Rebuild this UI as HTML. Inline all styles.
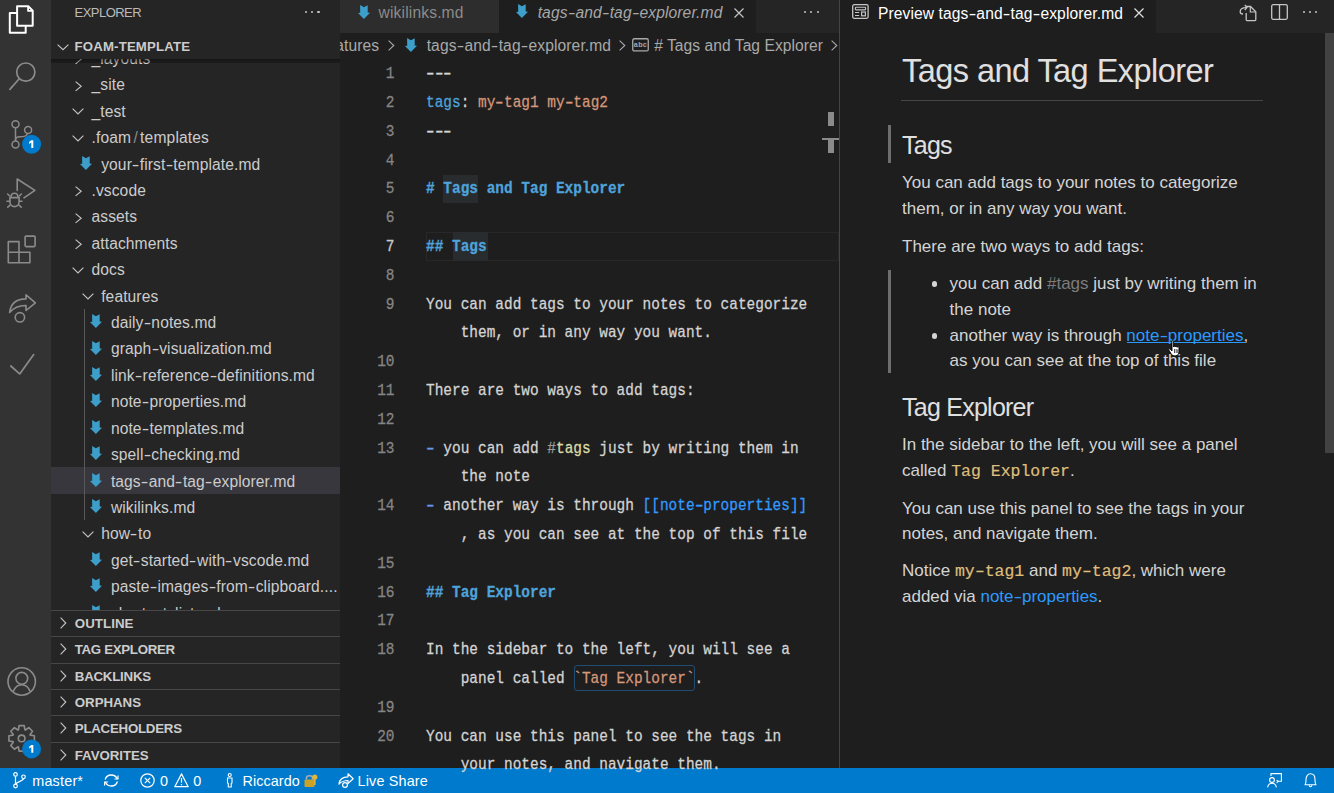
<!DOCTYPE html><html><head><meta charset="utf-8"><style>
html,body{margin:0;padding:0;width:1334px;height:793px;overflow:hidden;background:#1e1e1e;}
.t{position:absolute;white-space:pre;}
.m{-webkit-text-stroke:0.25px currentColor;transform:scaleY(1.1);transform-origin:0 18.3px;}
.r{position:absolute;}
.s{position:absolute;overflow:visible;}
.clip{position:absolute;overflow:hidden;}
</style></head><body>
<div class="r" style="left:0px;top:0px;width:51px;height:768px;background:#333333;"></div>
<div class="r" style="left:51px;top:0px;width:289px;height:768px;background:#252526;"></div>
<div class="r" style="left:340px;top:0px;width:499px;height:33px;background:#252526;"></div>
<div class="r" style="left:340px;top:0px;width:158.5px;height:33px;background:#2d2d2d;"></div>
<div class="r" style="left:498.5px;top:0px;width:257.5px;height:33px;background:#1e1e1e;"></div>
<div class="r" style="left:340px;top:33px;width:499px;height:735px;background:#1e1e1e;"></div>
<div class="r" style="left:839px;top:0px;width:1px;height:768px;background:#444444;"></div>
<div class="r" style="left:840px;top:0px;width:494px;height:33px;background:#252526;"></div>
<div class="r" style="left:840px;top:0px;width:316px;height:33px;background:#1e1e1e;"></div>
<div class="r" style="left:840px;top:33px;width:494px;height:735px;background:#1e1e1e;"></div>
<div class="r" style="left:0px;top:768px;width:1334px;height:25px;background:#007acc;"></div>
<div class="t" style="left:74.60px;top:3.69px;font:normal normal 13px/18.2px 'Liberation Sans', sans-serif;color:#bbbbbb;letter-spacing:-0.55px;">EXPLORER</div>
<div class="r" style="left:305.0px;top:10.5px;width:2.2px;height:2.2px;background:#c5c5c5;border-radius:50%"></div>
<div class="r" style="left:311.2px;top:10.5px;width:2.2px;height:2.2px;background:#c5c5c5;border-radius:50%"></div>
<div class="r" style="left:317.4px;top:10.5px;width:2.2px;height:2.2px;background:#c5c5c5;border-radius:50%"></div>
<div class="r" style="left:51px;top:467.3px;width:289px;height:26.42px;background:#37373d;"></div>
<div class="r" style="left:84px;top:308.78000000000003px;width:1px;height:211.36px;background:#585858;"></div>
<svg class="s" style="left:74.7px;top:54.18px;" width="7" height="10.5" viewBox="0 0 7 10.5"><path d="M0.6 0.6 L6.2 5.25 L0.6 9.9" fill="none" stroke="#c5c5c5" stroke-width="1.1"/></svg>
<div class="t" style="left:91.50px;top:47.85px;font:normal normal 15.6px/21.84px 'Liberation Sans', sans-serif;color:#cccccc;letter-spacing:0.1px;">_layouts</div>
<svg class="s" style="left:74.7px;top:80.6px;" width="7" height="10.5" viewBox="0 0 7 10.5"><path d="M0.6 0.6 L6.2 5.25 L0.6 9.9" fill="none" stroke="#c5c5c5" stroke-width="1.1"/></svg>
<div class="t" style="left:91.50px;top:74.27px;font:normal normal 15.6px/21.84px 'Liberation Sans', sans-serif;color:#cccccc;letter-spacing:0.1px;">_site</div>
<svg class="s" style="left:72.1px;top:108.22px;" width="12" height="6.8" viewBox="0 0 12 6.8"><path d="M0.6 0.6 L6.0 6.0 L11.4 0.6" fill="none" stroke="#c5c5c5" stroke-width="1.1"/></svg>
<div class="t" style="left:91.50px;top:100.69px;font:normal normal 15.6px/21.84px 'Liberation Sans', sans-serif;color:#cccccc;letter-spacing:0.1px;">_test</div>
<svg class="s" style="left:72.1px;top:134.64000000000001px;" width="12" height="6.8" viewBox="0 0 12 6.8"><path d="M0.6 0.6 L6.0 6.0 L11.4 0.6" fill="none" stroke="#c5c5c5" stroke-width="1.1"/></svg>
<div class="t" style="left:91.50px;top:127.11px;font:normal normal 15.6px/21.84px 'Liberation Sans', sans-serif;color:#cccccc;letter-spacing:0.15px;">.foam<span style="color:#8a8a8a;padding:0 2.2px">/</span>templates</div>
<svg class="s" style="left:80.1px;top:155.66px;" width="12" height="14" viewBox="0 0 12 14"><path d="M2.1 0 L5.9 2.3 L9.7 0.2 L9.7 7.6 L12 7.8 L5.9 13.9 L0 8.1 L2.2 7.7 Z" fill="#3d9fc9"/></svg>
<div class="t" style="left:101.20px;top:153.53px;font:normal normal 15.6px/21.84px 'Liberation Sans', sans-serif;color:#cccccc;letter-spacing:0.1px;">your<span style="display:inline-block;transform:scaleX(1.45);margin:0 1.3px">-</span>first<span style="display:inline-block;transform:scaleX(1.45);margin:0 1.3px">-</span>template.md</div>
<svg class="s" style="left:74.7px;top:186.28px;" width="7" height="10.5" viewBox="0 0 7 10.5"><path d="M0.6 0.6 L6.2 5.25 L0.6 9.9" fill="none" stroke="#c5c5c5" stroke-width="1.1"/></svg>
<div class="t" style="left:91.50px;top:179.95px;font:normal normal 15.6px/21.84px 'Liberation Sans', sans-serif;color:#cccccc;letter-spacing:0.1px;">.vscode</div>
<svg class="s" style="left:74.7px;top:212.70000000000002px;" width="7" height="10.5" viewBox="0 0 7 10.5"><path d="M0.6 0.6 L6.2 5.25 L0.6 9.9" fill="none" stroke="#c5c5c5" stroke-width="1.1"/></svg>
<div class="t" style="left:91.50px;top:206.37px;font:normal normal 15.6px/21.84px 'Liberation Sans', sans-serif;color:#cccccc;letter-spacing:0.1px;">assets</div>
<svg class="s" style="left:74.7px;top:239.12px;" width="7" height="10.5" viewBox="0 0 7 10.5"><path d="M0.6 0.6 L6.2 5.25 L0.6 9.9" fill="none" stroke="#c5c5c5" stroke-width="1.1"/></svg>
<div class="t" style="left:91.50px;top:232.79px;font:normal normal 15.6px/21.84px 'Liberation Sans', sans-serif;color:#cccccc;letter-spacing:0.1px;">attachments</div>
<svg class="s" style="left:72.1px;top:266.74px;" width="12" height="6.8" viewBox="0 0 12 6.8"><path d="M0.6 0.6 L6.0 6.0 L11.4 0.6" fill="none" stroke="#c5c5c5" stroke-width="1.1"/></svg>
<div class="t" style="left:91.50px;top:259.21px;font:normal normal 15.6px/21.84px 'Liberation Sans', sans-serif;color:#cccccc;letter-spacing:0.1px;">docs</div>
<svg class="s" style="left:81.80000000000001px;top:293.16px;" width="12" height="6.8" viewBox="0 0 12 6.8"><path d="M0.6 0.6 L6.0 6.0 L11.4 0.6" fill="none" stroke="#c5c5c5" stroke-width="1.1"/></svg>
<div class="t" style="left:101.20px;top:285.63px;font:normal normal 15.6px/21.84px 'Liberation Sans', sans-serif;color:#cccccc;letter-spacing:0.1px;">features</div>
<svg class="s" style="left:89.80000000000001px;top:314.18px;" width="12" height="14" viewBox="0 0 12 14"><path d="M2.1 0 L5.9 2.3 L9.7 0.2 L9.7 7.6 L12 7.8 L5.9 13.9 L0 8.1 L2.2 7.7 Z" fill="#3d9fc9"/></svg>
<div class="t" style="left:110.90px;top:312.05px;font:normal normal 15.6px/21.84px 'Liberation Sans', sans-serif;color:#cccccc;letter-spacing:0.1px;">daily<span style="display:inline-block;transform:scaleX(1.45);margin:0 1.3px">-</span>notes.md</div>
<svg class="s" style="left:89.80000000000001px;top:340.6px;" width="12" height="14" viewBox="0 0 12 14"><path d="M2.1 0 L5.9 2.3 L9.7 0.2 L9.7 7.6 L12 7.8 L5.9 13.9 L0 8.1 L2.2 7.7 Z" fill="#3d9fc9"/></svg>
<div class="t" style="left:110.90px;top:338.47px;font:normal normal 15.6px/21.84px 'Liberation Sans', sans-serif;color:#cccccc;letter-spacing:0.1px;">graph<span style="display:inline-block;transform:scaleX(1.45);margin:0 1.3px">-</span>visualization.md</div>
<svg class="s" style="left:89.80000000000001px;top:367.02px;" width="12" height="14" viewBox="0 0 12 14"><path d="M2.1 0 L5.9 2.3 L9.7 0.2 L9.7 7.6 L12 7.8 L5.9 13.9 L0 8.1 L2.2 7.7 Z" fill="#3d9fc9"/></svg>
<div class="t" style="left:110.90px;top:364.89px;font:normal normal 15.6px/21.84px 'Liberation Sans', sans-serif;color:#cccccc;letter-spacing:0.1px;">link<span style="display:inline-block;transform:scaleX(1.45);margin:0 1.3px">-</span>reference<span style="display:inline-block;transform:scaleX(1.45);margin:0 1.3px">-</span>definitions.md</div>
<svg class="s" style="left:89.80000000000001px;top:393.44px;" width="12" height="14" viewBox="0 0 12 14"><path d="M2.1 0 L5.9 2.3 L9.7 0.2 L9.7 7.6 L12 7.8 L5.9 13.9 L0 8.1 L2.2 7.7 Z" fill="#3d9fc9"/></svg>
<div class="t" style="left:110.90px;top:391.31px;font:normal normal 15.6px/21.84px 'Liberation Sans', sans-serif;color:#cccccc;letter-spacing:0.1px;">note<span style="display:inline-block;transform:scaleX(1.45);margin:0 1.3px">-</span>properties.md</div>
<svg class="s" style="left:89.80000000000001px;top:419.86px;" width="12" height="14" viewBox="0 0 12 14"><path d="M2.1 0 L5.9 2.3 L9.7 0.2 L9.7 7.6 L12 7.8 L5.9 13.9 L0 8.1 L2.2 7.7 Z" fill="#3d9fc9"/></svg>
<div class="t" style="left:110.90px;top:417.73px;font:normal normal 15.6px/21.84px 'Liberation Sans', sans-serif;color:#cccccc;letter-spacing:0.1px;">note<span style="display:inline-block;transform:scaleX(1.45);margin:0 1.3px">-</span>templates.md</div>
<svg class="s" style="left:89.80000000000001px;top:446.28px;" width="12" height="14" viewBox="0 0 12 14"><path d="M2.1 0 L5.9 2.3 L9.7 0.2 L9.7 7.6 L12 7.8 L5.9 13.9 L0 8.1 L2.2 7.7 Z" fill="#3d9fc9"/></svg>
<div class="t" style="left:110.90px;top:444.15px;font:normal normal 15.6px/21.84px 'Liberation Sans', sans-serif;color:#cccccc;letter-spacing:0.1px;">spell<span style="display:inline-block;transform:scaleX(1.45);margin:0 1.3px">-</span>checking.md</div>
<svg class="s" style="left:89.80000000000001px;top:472.7px;" width="12" height="14" viewBox="0 0 12 14"><path d="M2.1 0 L5.9 2.3 L9.7 0.2 L9.7 7.6 L12 7.8 L5.9 13.9 L0 8.1 L2.2 7.7 Z" fill="#3d9fc9"/></svg>
<div class="t" style="left:110.90px;top:470.57px;font:normal normal 15.6px/21.84px 'Liberation Sans', sans-serif;color:#cccccc;letter-spacing:0.1px;">tags<span style="display:inline-block;transform:scaleX(1.45);margin:0 1.3px">-</span>and<span style="display:inline-block;transform:scaleX(1.45);margin:0 1.3px">-</span>tag<span style="display:inline-block;transform:scaleX(1.45);margin:0 1.3px">-</span>explorer.md</div>
<svg class="s" style="left:89.80000000000001px;top:499.12px;" width="12" height="14" viewBox="0 0 12 14"><path d="M2.1 0 L5.9 2.3 L9.7 0.2 L9.7 7.6 L12 7.8 L5.9 13.9 L0 8.1 L2.2 7.7 Z" fill="#3d9fc9"/></svg>
<div class="t" style="left:110.90px;top:496.99px;font:normal normal 15.6px/21.84px 'Liberation Sans', sans-serif;color:#cccccc;letter-spacing:0.1px;">wikilinks.md</div>
<svg class="s" style="left:81.80000000000001px;top:530.94px;" width="12" height="6.8" viewBox="0 0 12 6.8"><path d="M0.6 0.6 L6.0 6.0 L11.4 0.6" fill="none" stroke="#c5c5c5" stroke-width="1.1"/></svg>
<div class="t" style="left:101.20px;top:523.41px;font:normal normal 15.6px/21.84px 'Liberation Sans', sans-serif;color:#cccccc;letter-spacing:0.1px;">how<span style="display:inline-block;transform:scaleX(1.45);margin:0 1.3px">-</span>to</div>
<svg class="s" style="left:89.80000000000001px;top:551.96px;" width="12" height="14" viewBox="0 0 12 14"><path d="M2.1 0 L5.9 2.3 L9.7 0.2 L9.7 7.6 L12 7.8 L5.9 13.9 L0 8.1 L2.2 7.7 Z" fill="#3d9fc9"/></svg>
<div class="t" style="left:110.90px;top:549.83px;font:normal normal 15.6px/21.84px 'Liberation Sans', sans-serif;color:#cccccc;letter-spacing:0.1px;">get<span style="display:inline-block;transform:scaleX(1.45);margin:0 1.3px">-</span>started<span style="display:inline-block;transform:scaleX(1.45);margin:0 1.3px">-</span>with<span style="display:inline-block;transform:scaleX(1.45);margin:0 1.3px">-</span>vscode.md</div>
<svg class="s" style="left:89.80000000000001px;top:578.38px;" width="12" height="14" viewBox="0 0 12 14"><path d="M2.1 0 L5.9 2.3 L9.7 0.2 L9.7 7.6 L12 7.8 L5.9 13.9 L0 8.1 L2.2 7.7 Z" fill="#3d9fc9"/></svg>
<div class="t" style="left:110.90px;top:576.25px;font:normal normal 15.6px/21.84px 'Liberation Sans', sans-serif;color:#cccccc;letter-spacing:0.1px;">paste<span style="display:inline-block;transform:scaleX(1.45);margin:0 1.3px">-</span>images<span style="display:inline-block;transform:scaleX(1.45);margin:0 1.3px">-</span>from<span style="display:inline-block;transform:scaleX(1.45);margin:0 1.3px">-</span>clipboard....</div>
<svg class="s" style="left:89.80000000000001px;top:604.8000000000001px;" width="12" height="14" viewBox="0 0 12 14"><path d="M2.1 0 L5.9 2.3 L9.7 0.2 L9.7 7.6 L12 7.8 L5.9 13.9 L0 8.1 L2.2 7.7 Z" fill="#3d9fc9"/></svg>
<div class="t" style="left:110.90px;top:602.67px;font:normal normal 15.6px/21.84px 'Liberation Sans', sans-serif;color:#cccccc;letter-spacing:0.1px;">shortcut<span style="display:inline-block;transform:scaleX(1.45);margin:0 1.3px">-</span>list.md</div>
<div class="r" style="left:51px;top:33px;width:289px;height:26.4px;background:#252526;"></div>
<svg class="s" style="left:56.6px;top:43.9px;" width="12" height="6.5" viewBox="0 0 12 6.5"><path d="M0.6 0.6 L6.0 5.7 L11.4 0.6" fill="none" stroke="#c5c5c5" stroke-width="1.1"/></svg>
<div class="t" style="left:74.60px;top:37.78px;font:normal bold 13.2px/18.48px 'Liberation Sans', sans-serif;color:#cccccc;letter-spacing:0.17px;">FOAM-TEMPLATE</div>
<div class="r" style="left:51px;top:59px;width:289px;height:4px;background:linear-gradient(rgba(0,0,0,0.42),rgba(0,0,0,0.22));"></div>
<div class="r" style="left:51px;top:610px;width:289px;height:158px;background:#252526;"></div>
<div class="r" style="left:51px;top:610px;width:289px;height:1px;background:#474747;"></div>
<svg class="s" style="left:59.9px;top:617px;" width="6.6" height="12" viewBox="0 0 6.6 12"><path d="M0.6 0.6 L5.8 6.0 L0.6 11.4" fill="none" stroke="#c5c5c5" stroke-width="1.1"/></svg>
<div class="t" style="left:74.80px;top:615.18px;font:normal bold 13.3px/18.62px 'Liberation Sans', sans-serif;color:#cccccc;letter-spacing:0.05px;">OUTLINE</div>
<div class="r" style="left:51px;top:636px;width:289px;height:1px;background:#474747;"></div>
<svg class="s" style="left:59.9px;top:643px;" width="6.6" height="12" viewBox="0 0 6.6 12"><path d="M0.6 0.6 L5.8 6.0 L0.6 11.4" fill="none" stroke="#c5c5c5" stroke-width="1.1"/></svg>
<div class="t" style="left:74.80px;top:641.18px;font:normal bold 13.3px/18.62px 'Liberation Sans', sans-serif;color:#cccccc;letter-spacing:-0.33px;">TAG EXPLORER</div>
<div class="r" style="left:51px;top:663px;width:289px;height:1px;background:#474747;"></div>
<svg class="s" style="left:59.9px;top:670px;" width="6.6" height="12" viewBox="0 0 6.6 12"><path d="M0.6 0.6 L5.8 6.0 L0.6 11.4" fill="none" stroke="#c5c5c5" stroke-width="1.1"/></svg>
<div class="t" style="left:74.80px;top:668.18px;font:normal bold 13.3px/18.62px 'Liberation Sans', sans-serif;color:#cccccc;letter-spacing:-0.25px;">BACKLINKS</div>
<div class="r" style="left:51px;top:689px;width:289px;height:1px;background:#474747;"></div>
<svg class="s" style="left:59.9px;top:696px;" width="6.6" height="12" viewBox="0 0 6.6 12"><path d="M0.6 0.6 L5.8 6.0 L0.6 11.4" fill="none" stroke="#c5c5c5" stroke-width="1.1"/></svg>
<div class="t" style="left:74.80px;top:694.18px;font:normal bold 13.3px/18.62px 'Liberation Sans', sans-serif;color:#cccccc;letter-spacing:-0.04px;">ORPHANS</div>
<div class="r" style="left:51px;top:715px;width:289px;height:1px;background:#474747;"></div>
<svg class="s" style="left:59.9px;top:722px;" width="6.6" height="12" viewBox="0 0 6.6 12"><path d="M0.6 0.6 L5.8 6.0 L0.6 11.4" fill="none" stroke="#c5c5c5" stroke-width="1.1"/></svg>
<div class="t" style="left:74.80px;top:720.18px;font:normal bold 13.3px/18.62px 'Liberation Sans', sans-serif;color:#cccccc;letter-spacing:-0.26px;">PLACEHOLDERS</div>
<div class="r" style="left:51px;top:742px;width:289px;height:1px;background:#474747;"></div>
<svg class="s" style="left:59.9px;top:749px;" width="6.6" height="12" viewBox="0 0 6.6 12"><path d="M0.6 0.6 L5.8 6.0 L0.6 11.4" fill="none" stroke="#c5c5c5" stroke-width="1.1"/></svg>
<div class="t" style="left:74.80px;top:747.18px;font:normal bold 13.3px/18.62px 'Liberation Sans', sans-serif;color:#cccccc;letter-spacing:-0.07px;">FAVORITES</div>
<svg class="s" style="left:0;top:0" width="51" height="768" viewBox="0 0 51 768">
<g fill="none" stroke="#ffffff" stroke-width="2" stroke-linejoin="round">
<path d="M17.1 6.2 H28.3 L32.7 10.6 V25.7 H17.1 Z"/>
<path d="M28.1 6.4 V10.9 H32.6" stroke-width="1.8"/>
<path d="M17.1 13 H9.8 V32.8 H25.7 V25.7"/>
</g>
<g fill="none" stroke="#8b8b8b" stroke-width="1.7" stroke-linejoin="round" stroke-linecap="round">
<circle cx="25.8" cy="72.1" r="9.1"/>
<path d="M19.2 78.8 L9.9 89.4"/>
</g>
<g fill="none" stroke="#8b8b8b" stroke-width="1.5">
<circle cx="15.5" cy="124.3" r="3.5"/>
<circle cx="28.1" cy="129.9" r="3.5"/>
<circle cx="15.5" cy="144.5" r="3.5"/>
<path d="M15.5 127.8 V141"/>
<path d="M27.5 133.3 C27 136 24.5 136.8 20 136.8 C17 136.8 15.5 138 15.5 140"/>
</g>
<circle cx="31.6" cy="144.2" r="9.5" fill="#007acc"/>
<g fill="none" stroke="#8b8b8b" stroke-width="1.6" stroke-linejoin="round" stroke-linecap="round">
<path d="M17.2 190.5 V179 L34.9 190.3 L24 197.8"/>
<path d="M9.9 197.6 H19.1 V201.5 C19.1 204.6 17 206.6 14.5 206.6 C12 206.6 9.9 204.6 9.9 201.5 Z"/>
<path d="M11 197.4 C11 194.6 12.6 193.2 14.5 193.2 C16.4 193.2 18 194.6 18 197.4"/>
<path d="M9.8 196 L7.6 194 M9.6 201.2 H7 M10.2 205 L7.8 207.2 M19.2 196 L21.4 194 M19.4 201.2 H22 M18.8 205 L21.2 207.2"/>
</g>
<g fill="none" stroke="#8b8b8b" stroke-width="1.6" stroke-linejoin="round">
<path d="M8.3 241.6 H19 V262.7 H8.3 Z M8.3 252.2 H29.9 V262.7 H19"/>
<rect x="25.1" y="236.1" width="10" height="10.5" rx="1"/>
</g>
<g fill="none" stroke="#8b8b8b" stroke-width="1.6" stroke-linejoin="round">
<path d="M26 294.8 L35.4 302.8 L26 310.5 V305.5 C19 305.3 13.5 308 9.6 312.5 C10.8 303.5 17 298.9 26 298.9 Z"/>
<circle cx="19.9" cy="317.3" r="4.7"/>
</g>
<path d="M10.8 366 L19.7 373.9 L33.7 354.6" fill="none" stroke="#8b8b8b" stroke-width="1.7" stroke-linecap="round" stroke-linejoin="round"/>
<g fill="none" stroke="#8b8b8b" stroke-width="1.6">
<circle cx="21.7" cy="681.5" r="13.7"/>
<circle cx="21.8" cy="678.3" r="5.9"/>
<path d="M13.3 691.4 C15 687 18 684.7 21.7 684.7 C25.4 684.7 28.4 687 30.1 691.4"/>
<path d="M18.41 729.79 L19.07 725.66 L24.23 725.66 L24.89 729.79 L25.45 730.02 L28.83 727.56 L32.49 731.22 L30.03 734.60 L30.26 735.16 L34.39 735.82 L34.39 740.98 L30.26 741.64 L30.03 742.20 L32.49 745.58 L28.83 749.24 L25.45 746.78 L24.89 747.01 L24.23 751.14 L19.07 751.14 L18.41 747.01 L17.85 746.78 L14.47 749.24 L10.81 745.58 L13.27 742.20 L13.04 741.64 L8.91 740.98 L8.91 735.82 L13.04 735.16 L13.27 734.60 L10.81 731.22 L14.47 727.56 L17.85 730.02 Z" stroke-linejoin="round"/>
<circle cx="21.65" cy="738.4" r="3.3"/>
</g>
<circle cx="31.6" cy="748.9" r="9.5" fill="#007acc"/>
</svg>
<svg class="s" style="left:0;top:0" width="51" height="768" viewBox="0 0 51 768"><path d="M31.3 140.2 H33.3 V148.1 H31.3 V142.6 L29.1 143.9 V142 Z" fill="#fff"/></svg>
<svg class="s" style="left:0;top:0" width="51" height="768" viewBox="0 0 51 768"><path d="M31.3 744.9 H33.3 V752.8 H31.3 V747.3 L29.1 748.6 V746.7 Z" fill="#fff"/></svg>
<svg class="s" style="left:357.7px;top:4.7px;" width="12" height="14" viewBox="0 0 12 14"><path d="M2.1 0 L5.9 2.3 L9.7 0.2 L9.7 7.6 L12 7.8 L5.9 13.9 L0 8.1 L2.2 7.7 Z" fill="#3d9fc9"/></svg>
<div class="t" style="left:378.60px;top:1.97px;font:normal normal 15.6px/21.84px 'Liberation Sans', sans-serif;color:#8b8b8b;letter-spacing:0.15px;">wikilinks.md</div>
<svg class="s" style="left:516.4px;top:4.4px;" width="12" height="14" viewBox="0 0 12 14"><path d="M2.1 0 L5.9 2.3 L9.7 0.2 L9.7 7.6 L12 7.8 L5.9 13.9 L0 8.1 L2.2 7.7 Z" fill="#3d9fc9"/></svg>
<div class="t" style="left:537.70px;top:2.37px;font:italic normal 15.6px/21.84px 'Liberation Sans', sans-serif;color:#a7a7a7;letter-spacing:0.1px;">tags<span style="display:inline-block;transform:scaleX(1.45);margin:0 1.3px">-</span>and<span style="display:inline-block;transform:scaleX(1.45);margin:0 1.3px">-</span>tag<span style="display:inline-block;transform:scaleX(1.45);margin:0 1.3px">-</span>explorer.md</div>
<svg class="s" style="left:734px;top:7.6px;" width="10" height="10" viewBox="0 0 10 10"><path d="M0.5 0.5 L9.5 9.5 M9.5 0.5 L0.5 9.5" stroke="#c5c5c5" stroke-width="1.2"/></svg>
<div class="r" style="left:804.0px;top:11.2px;width:2.2px;height:2.2px;background:#c5c5c5;border-radius:50%"></div>
<div class="r" style="left:810.3px;top:11.2px;width:2.2px;height:2.2px;background:#c5c5c5;border-radius:50%"></div>
<div class="r" style="left:816.6px;top:11.2px;width:2.2px;height:2.2px;background:#c5c5c5;border-radius:50%"></div>
<div class="t" style="left:322.10px;top:35.07px;font:normal normal 15.6px/21.84px 'Liberation Sans', sans-serif;color:#a9a9a9;letter-spacing:0.1px;clip-path:inset(0 0 0 17.8px);">features</div>
<svg class="s" style="left:387.7px;top:40.2px;" width="6.6" height="11" viewBox="0 0 6.6 11"><path d="M0.6 0.6 L5.8 5.5 L0.6 10.4" fill="none" stroke="#a9a9a9" stroke-width="1.1"/></svg>
<svg class="s" style="left:405.2px;top:38.4px;" width="12" height="14" viewBox="0 0 12 14"><path d="M2.1 0 L5.9 2.3 L9.7 0.2 L9.7 7.6 L12 7.8 L5.9 13.9 L0 8.1 L2.2 7.7 Z" fill="#3d9fc9"/></svg>
<div class="t" style="left:426.70px;top:35.07px;font:normal normal 15.6px/21.84px 'Liberation Sans', sans-serif;color:#a9a9a9;letter-spacing:0.1px;">tags<span style="display:inline-block;transform:scaleX(1.45);margin:0 1.3px">-</span>and<span style="display:inline-block;transform:scaleX(1.45);margin:0 1.3px">-</span>tag<span style="display:inline-block;transform:scaleX(1.45);margin:0 1.3px">-</span>explorer.md</div>
<svg class="s" style="left:619px;top:40.2px;" width="6.6" height="11" viewBox="0 0 6.6 11"><path d="M0.6 0.6 L5.8 5.5 L0.6 10.4" fill="none" stroke="#a9a9a9" stroke-width="1.1"/></svg>
<svg class="s" style="left:632px;top:37.9px;" width="17" height="14" viewBox="0 0 17 14"><rect x="0.75" y="0.75" width="15.5" height="12.2" rx="1.5" fill="none" stroke="#a9a9a9" stroke-width="1.3"/><text x="8.5" y="9.3" font-family="Liberation Sans" font-weight="bold" font-size="7.2" fill="#a9a9a9" text-anchor="middle" letter-spacing="0.3">abc</text></svg>
<div class="t" style="left:654.20px;top:35.07px;font:normal normal 15.6px/21.84px 'Liberation Sans', sans-serif;color:#a9a9a9;letter-spacing:0.05px;"># Tags and Tag Explorer</div>
<svg class="s" style="left:831.3px;top:40.2px;" width="6.6" height="11" viewBox="0 0 6.6 11"><path d="M0.6 0.6 L5.8 5.5 L0.6 10.4" fill="none" stroke="#a9a9a9" stroke-width="1.1"/></svg>
<div class="r" style="left:426px;top:232.2px;width:411px;height:26.8px;border:1px solid #282828;"></div>
<div class="r" style="left:443.1px;top:174.6px;width:34.7px;height:28.8px;background:#282c2f;"></div>
<div class="r" style="left:453px;top:232.20000000000002px;width:34.7px;height:28.8px;background:#282c2f;"></div>
<div class="r" style="left:574.0px;top:665.2px;width:121.4px;height:25.8px;border:1px solid #1f4d73;border-radius:3px;box-sizing:border-box;"></div>
<div class="t m" style="left:385.83px;top:60.10px;font:normal normal 14.45px/28.8px 'Liberation Mono', monospace;color:#858585;letter-spacing:0px;">1</div>
<div class="t m" style="left:426.00px;top:60.10px;font:normal normal 14.45px/28.8px 'Liberation Mono', monospace;color:#d4d4d4;letter-spacing:0px;"><span style="color:#d4d4d4;"><span style="display:inline-block;transform:scaleX(1.5)">-</span><span style="display:inline-block;transform:scaleX(1.5)">-</span><span style="display:inline-block;transform:scaleX(1.5)">-</span></span></div>
<div class="t m" style="left:385.83px;top:88.90px;font:normal normal 14.45px/28.8px 'Liberation Mono', monospace;color:#858585;letter-spacing:0px;">2</div>
<div class="t m" style="left:426.00px;top:88.90px;font:normal normal 14.45px/28.8px 'Liberation Mono', monospace;color:#d4d4d4;letter-spacing:0px;"><span style="color:#4fa3dc;">tags</span><span style="color:#d4d4d4;">: </span><span style="color:#d4977b;">my<span style="display:inline-block;transform:scaleX(1.5)">-</span>tag1 my<span style="display:inline-block;transform:scaleX(1.5)">-</span>tag2</span></div>
<div class="t m" style="left:385.83px;top:117.70px;font:normal normal 14.45px/28.8px 'Liberation Mono', monospace;color:#858585;letter-spacing:0px;">3</div>
<div class="t m" style="left:426.00px;top:117.70px;font:normal normal 14.45px/28.8px 'Liberation Mono', monospace;color:#d4d4d4;letter-spacing:0px;"><span style="color:#d4d4d4;"><span style="display:inline-block;transform:scaleX(1.5)">-</span><span style="display:inline-block;transform:scaleX(1.5)">-</span><span style="display:inline-block;transform:scaleX(1.5)">-</span></span></div>
<div class="t m" style="left:385.83px;top:146.50px;font:normal normal 14.45px/28.8px 'Liberation Mono', monospace;color:#858585;letter-spacing:0px;">4</div>
<div class="t m" style="left:385.83px;top:175.30px;font:normal normal 14.45px/28.8px 'Liberation Mono', monospace;color:#858585;letter-spacing:0px;">5</div>
<div class="t m" style="left:426.00px;top:175.30px;font:normal normal 14.45px/28.8px 'Liberation Mono', monospace;color:#d4d4d4;letter-spacing:0px;"><span style="color:#4fa3dc;font-weight:bold;"># Tags and Tag Explorer</span></div>
<div class="t m" style="left:385.83px;top:204.10px;font:normal normal 14.45px/28.8px 'Liberation Mono', monospace;color:#858585;letter-spacing:0px;">6</div>
<div class="t m" style="left:385.83px;top:232.90px;font:normal normal 14.45px/28.8px 'Liberation Mono', monospace;color:#c6c6c6;letter-spacing:0px;">7</div>
<div class="t m" style="left:426.00px;top:232.90px;font:normal normal 14.45px/28.8px 'Liberation Mono', monospace;color:#d4d4d4;letter-spacing:0px;"><span style="color:#4fa3dc;font-weight:bold;">## Tags</span></div>
<div class="t m" style="left:385.83px;top:261.70px;font:normal normal 14.45px/28.8px 'Liberation Mono', monospace;color:#858585;letter-spacing:0px;">8</div>
<div class="t m" style="left:385.83px;top:290.50px;font:normal normal 14.45px/28.8px 'Liberation Mono', monospace;color:#858585;letter-spacing:0px;">9</div>
<div class="t m" style="left:426.00px;top:290.50px;font:normal normal 14.45px/28.8px 'Liberation Mono', monospace;color:#d4d4d4;letter-spacing:0px;"><span style="color:#d4d4d4;">You can add tags to your notes to categorize</span></div>
<div class="t m" style="left:426.00px;top:319.30px;font:normal normal 14.45px/28.8px 'Liberation Mono', monospace;color:#d4d4d4;letter-spacing:0px;"><span style="color:#d4d4d4;">    them, or in any way you want.</span></div>
<div class="t m" style="left:377.16px;top:348.10px;font:normal normal 14.45px/28.8px 'Liberation Mono', monospace;color:#858585;letter-spacing:0px;">10</div>
<div class="t m" style="left:377.16px;top:376.90px;font:normal normal 14.45px/28.8px 'Liberation Mono', monospace;color:#858585;letter-spacing:0px;">11</div>
<div class="t m" style="left:426.00px;top:376.90px;font:normal normal 14.45px/28.8px 'Liberation Mono', monospace;color:#d4d4d4;letter-spacing:0px;"><span style="color:#d4d4d4;">There are two ways to add tags:</span></div>
<div class="t m" style="left:377.16px;top:405.70px;font:normal normal 14.45px/28.8px 'Liberation Mono', monospace;color:#858585;letter-spacing:0px;">12</div>
<div class="t m" style="left:377.16px;top:434.50px;font:normal normal 14.45px/28.8px 'Liberation Mono', monospace;color:#858585;letter-spacing:0px;">13</div>
<div class="t m" style="left:426.00px;top:434.50px;font:normal normal 14.45px/28.8px 'Liberation Mono', monospace;color:#d4d4d4;letter-spacing:0px;"><span style="color:#6796e6;"><span style="display:inline-block;transform:scaleX(1.5)">-</span></span><span style="color:#d4d4d4;"> you can add </span><span style="color:#9b9b9b;">#</span><span style="color:#dcdcaa;">tags</span><span style="color:#d4d4d4;"> just by writing them in</span></div>
<div class="t m" style="left:426.00px;top:463.30px;font:normal normal 14.45px/28.8px 'Liberation Mono', monospace;color:#d4d4d4;letter-spacing:0px;"><span style="color:#d4d4d4;">    the note</span></div>
<div class="t m" style="left:377.16px;top:492.10px;font:normal normal 14.45px/28.8px 'Liberation Mono', monospace;color:#858585;letter-spacing:0px;">14</div>
<div class="t m" style="left:426.00px;top:492.10px;font:normal normal 14.45px/28.8px 'Liberation Mono', monospace;color:#d4d4d4;letter-spacing:0px;"><span style="color:#6796e6;"><span style="display:inline-block;transform:scaleX(1.5)">-</span></span><span style="color:#d4d4d4;"> another way is through </span><span style="color:#3399ff;">[[note<span style="display:inline-block;transform:scaleX(1.5)">-</span>properties]]</span></div>
<div class="t m" style="left:426.00px;top:520.90px;font:normal normal 14.45px/28.8px 'Liberation Mono', monospace;color:#d4d4d4;letter-spacing:0px;"><span style="color:#d4d4d4;">    , as you can see at the top of this file</span></div>
<div class="t m" style="left:377.16px;top:549.70px;font:normal normal 14.45px/28.8px 'Liberation Mono', monospace;color:#858585;letter-spacing:0px;">15</div>
<div class="t m" style="left:377.16px;top:578.50px;font:normal normal 14.45px/28.8px 'Liberation Mono', monospace;color:#858585;letter-spacing:0px;">16</div>
<div class="t m" style="left:426.00px;top:578.50px;font:normal normal 14.45px/28.8px 'Liberation Mono', monospace;color:#d4d4d4;letter-spacing:0px;"><span style="color:#4fa3dc;font-weight:bold;">## Tag Explorer</span></div>
<div class="t m" style="left:377.16px;top:607.30px;font:normal normal 14.45px/28.8px 'Liberation Mono', monospace;color:#858585;letter-spacing:0px;">17</div>
<div class="t m" style="left:377.16px;top:636.10px;font:normal normal 14.45px/28.8px 'Liberation Mono', monospace;color:#858585;letter-spacing:0px;">18</div>
<div class="t m" style="left:426.00px;top:636.10px;font:normal normal 14.45px/28.8px 'Liberation Mono', monospace;color:#d4d4d4;letter-spacing:0px;"><span style="color:#d4d4d4;">In the sidebar to the left, you will see a</span></div>
<div class="t m" style="left:426.00px;top:664.90px;font:normal normal 14.45px/28.8px 'Liberation Mono', monospace;color:#d4d4d4;letter-spacing:0px;"><span style="color:#d4d4d4;">    panel called </span><span style="color:#d4977b;">`Tag Explorer`</span><span style="color:#d4d4d4;">.</span></div>
<div class="t m" style="left:377.16px;top:693.70px;font:normal normal 14.45px/28.8px 'Liberation Mono', monospace;color:#858585;letter-spacing:0px;">19</div>
<div class="t m" style="left:377.16px;top:722.50px;font:normal normal 14.45px/28.8px 'Liberation Mono', monospace;color:#858585;letter-spacing:0px;">20</div>
<div class="t m" style="left:426.00px;top:722.50px;font:normal normal 14.45px/28.8px 'Liberation Mono', monospace;color:#d4d4d4;letter-spacing:0px;"><span style="color:#d4d4d4;">You can use this panel to see the tags in</span></div>
<div class="t m" style="left:426.00px;top:751.30px;font:normal normal 14.45px/28.8px 'Liberation Mono', monospace;color:#d4d4d4;letter-spacing:0px;"><span style="color:#d4d4d4;">    your notes, and navigate them.</span></div>
<div class="r" style="left:827.9px;top:112.1px;width:6.2px;height:13.6px;background:#8a8a8a;"></div>
<div class="r" style="left:827.9px;top:138.9px;width:6.2px;height:13.9px;background:#8a8a8a;"></div>
<div class="r" style="left:822.3px;top:138.2px;width:16.7px;height:2.1px;background:#8a8a8a;"></div>
<svg class="s" style="left:852.1px;top:3.9px;" width="17" height="15" viewBox="0 0 17 15"><rect x="0.7" y="0.7" width="15.4" height="13.6" rx="1.5" fill="none" stroke="#c5c5c5" stroke-width="1.3"/><rect x="3.4" y="3.3" width="10.2" height="2.6" rx="0.6" fill="none" stroke="#c5c5c5" stroke-width="1.1"/><path d="M3 8.5 H7.2 M3 11.5 H7.2" stroke="#c5c5c5" stroke-width="1.1"/><rect x="9.6" y="8" width="3.8" height="3.8" fill="none" stroke="#c5c5c5" stroke-width="1.2"/></svg>
<div class="t" style="left:878.00px;top:2.57px;font:normal normal 15.6px/21.84px 'Liberation Sans', sans-serif;color:#ffffff;letter-spacing:0.1px;">Preview tags<span style="display:inline-block;transform:scaleX(1.45);margin:0 1.3px">-</span>and<span style="display:inline-block;transform:scaleX(1.45);margin:0 1.3px">-</span>tag<span style="display:inline-block;transform:scaleX(1.45);margin:0 1.3px">-</span>explorer.md</div>
<svg class="s" style="left:1134px;top:7.9px;" width="10" height="10" viewBox="0 0 10 10"><path d="M0.5 0.5 L9.5 9.5 M9.5 0.5 L0.5 9.5" stroke="#e0e0e0" stroke-width="1.2"/></svg>
<svg class="s" style="left:1239px;top:3.7px;" width="18" height="17" viewBox="0 0 18 17"><path d="M7 2.5 H11.5 L16.8 7.8 V15.8 C16.8 16.3 16.4 16.6 16 16.6 H8 C7.5 16.6 7.2 16.3 7.2 15.8 V9" fill="none" stroke="#c5c5c5" stroke-width="1.3"/><path d="M11.3 2.6 V8 H16.6" fill="none" stroke="#c5c5c5" stroke-width="1.2"/><path d="M7.5 3.6 C3 3.6 1 5 1.2 8 C1.3 9.5 2.5 10 4 10" fill="none" stroke="#c5c5c5" stroke-width="1.3"/><path d="M5.8 1 L8 3.6 L5.8 6" fill="none" stroke="#c5c5c5" stroke-width="1.2"/></svg>
<svg class="s" style="left:1270.7px;top:4.2px;" width="17" height="16" viewBox="0 0 17 16"><rect x="0.7" y="0.7" width="15.6" height="14.6" rx="1.5" fill="none" stroke="#c5c5c5" stroke-width="1.3"/><path d="M8.5 0.8 V15.2" stroke="#c5c5c5" stroke-width="1.3"/></svg>
<div class="r" style="left:1302.5px;top:11.2px;width:2.2px;height:2.2px;background:#c5c5c5;border-radius:50%"></div>
<div class="r" style="left:1308.7px;top:11.2px;width:2.2px;height:2.2px;background:#c5c5c5;border-radius:50%"></div>
<div class="r" style="left:1314.9px;top:11.2px;width:2.2px;height:2.2px;background:#c5c5c5;border-radius:50%"></div>
<div class="r" style="left:1325px;top:33px;width:9px;height:420px;background:#424242;"></div>
<div class="t" style="left:902.00px;top:50.53px;font:normal normal 32.5px/40px 'Liberation Sans', sans-serif;color:#e0e0e0;letter-spacing:-0.55px;">Tags and Tag Explorer</div>
<div class="r" style="left:901px;top:100px;width:362px;height:1px;background:#464646;"></div>
<div class="r" style="left:887.5px;top:124.6px;width:3.6px;height:38.9px;background:#6e6e6e;"></div>
<div class="t" style="left:902.00px;top:129.03px;font:normal normal 25px/32px 'Liberation Sans', sans-serif;color:#e0e0e0;letter-spacing:-0.75px;">Tags</div>
<div class="t" style="left:902.00px;top:170.06px;font:normal normal 17.0px/25.7px 'Liberation Sans', sans-serif;color:#d4d4d4;letter-spacing:0px;">You can add tags to your notes to categorize</div>
<div class="t" style="left:902.00px;top:195.56px;font:normal normal 17.0px/25.7px 'Liberation Sans', sans-serif;color:#d4d4d4;letter-spacing:0px;">them, or in any way you want.</div>
<div class="t" style="left:902.00px;top:233.66px;font:normal normal 17.0px/25.7px 'Liberation Sans', sans-serif;color:#d4d4d4;letter-spacing:0px;">There are two ways to add tags:</div>
<div class="r" style="left:887.5px;top:270px;width:3.6px;height:103.4px;background:#6e6e6e;"></div>
<div class="r" style="left:931.6px;top:281.3px;width:5.4px;height:5.4px;background:#d4d4d4;border-radius:50%"></div>
<div class="r" style="left:931.6px;top:333.3px;width:5.4px;height:5.4px;background:#d4d4d4;border-radius:50%"></div>
<div class="t" style="left:949.60px;top:271.16px;font:normal normal 17.0px/25.7px 'Liberation Sans', sans-serif;color:#d4d4d4;letter-spacing:0px;">you can add <span style="color:#7c7c7c">#tags</span> just by writing them in</div>
<div class="t" style="left:949.60px;top:296.66px;font:normal normal 17.0px/25.7px 'Liberation Sans', sans-serif;color:#d4d4d4;letter-spacing:0px;">the note</div>
<div class="t" style="left:949.60px;top:322.96px;font:normal normal 17.0px/25.7px 'Liberation Sans', sans-serif;color:#d4d4d4;letter-spacing:0px;">another way is through <span style="color:#2b9aff">note<span style="display:inline-block;transform:scaleX(1.45);margin:0 1.4px">-</span>properties</span>,</div>
<div class="t" style="left:949.60px;top:348.16px;font:normal normal 17.0px/25.7px 'Liberation Sans', sans-serif;color:#d4d4d4;letter-spacing:0px;">as you can see at the top of this file</div>
<div class="t" style="left:902.00px;top:391.13px;font:normal normal 25px/32px 'Liberation Sans', sans-serif;color:#e0e0e0;letter-spacing:-0.75px;">Tag Explorer</div>
<div class="t" style="left:902.00px;top:432.26px;font:normal normal 17.0px/25.7px 'Liberation Sans', sans-serif;color:#d4d4d4;letter-spacing:0px;">In the sidebar to the left, you will see a panel</div>
<div class="t" style="left:902.00px;top:458.06px;font:normal normal 17.0px/25.7px 'Liberation Sans', sans-serif;color:#d4d4d4;letter-spacing:0px;">called <span style="font-family:'Liberation Mono',monospace;font-size:16.5px;color:#dfbd7b;-webkit-text-stroke:0.2px currentColor">Tag Explorer</span>.</div>
<div class="t" style="left:902.00px;top:496.16px;font:normal normal 17.0px/25.7px 'Liberation Sans', sans-serif;color:#d4d4d4;letter-spacing:0px;">You can use this panel to see the tags in your</div>
<div class="t" style="left:902.00px;top:520.96px;font:normal normal 17.0px/25.7px 'Liberation Sans', sans-serif;color:#d4d4d4;letter-spacing:0px;">notes, and navigate them.</div>
<div class="t" style="left:902.00px;top:558.16px;font:normal normal 17.0px/25.7px 'Liberation Sans', sans-serif;color:#d4d4d4;letter-spacing:0px;">Notice <span style="font-family:'Liberation Mono',monospace;font-size:16.5px;color:#dfbd7b;-webkit-text-stroke:0.2px currentColor">my<span style="display:inline-block;transform:scaleX(1.5)">-</span>tag1</span> and <span style="font-family:'Liberation Mono',monospace;font-size:16.5px;color:#dfbd7b;-webkit-text-stroke:0.2px currentColor">my<span style="display:inline-block;transform:scaleX(1.5)">-</span>tag2</span>, which were</div>
<div class="t" style="left:902.00px;top:583.66px;font:normal normal 17.0px/25.7px 'Liberation Sans', sans-serif;color:#d4d4d4;letter-spacing:0px;">added via <span style="color:#2b9aff">note<span style="display:inline-block;transform:scaleX(1.45);margin:0 1.4px">-</span>properties</span>.</div>
<div class="r" style="left:1126.5px;top:342px;width:119.3px;height:1.1px;background:#2b9aff;"></div>
<svg class="s" style="left:1168px;top:340px;" width="14" height="17" viewBox="0 0 14 17"><path d="M4 1.2 C4 0.4 5.6 0.4 5.6 1.2 V7 C5.8 6 7.4 6 7.4 7 C7.6 6.2 9.2 6.2 9.2 7.3 C9.4 6.6 11 6.6 11 7.6 V11.5 C11 14 9.8 15.8 7.5 15.8 H6.5 C4.8 15.8 4 15 3 13.6 L0.8 10 C0.3 9.2 1.4 8.4 2.2 9.2 L4 11 Z" fill="#ffffff" stroke="#000000" stroke-width="0.9"/><path d="M6.5 9 V13 M8.2 9 V13 M9.8 9.3 V13" stroke="#000" stroke-width="0.7"/></svg>
<svg class="s" style="left:12.9px;top:772.4px;" width="13" height="16.5" viewBox="0 0 13 16.5"><g fill="none" stroke="#fff" stroke-width="1.2"><circle cx="2.5" cy="2.4" r="1.8"/><circle cx="2.5" cy="14" r="1.8"/><circle cx="10.5" cy="4.8" r="1.8"/><path d="M2.5 4.2 V12.2 M10.5 6.6 C10.5 9.5 4 9 2.8 12"/></g></svg>
<div class="t" style="left:32.20px;top:771.43px;font:normal normal 14.4px/20.16px 'Liberation Sans', sans-serif;color:#ffffff;letter-spacing:0.2px;">master*</div>
<svg class="s" style="left:103px;top:774px;" width="16.6" height="13" viewBox="0 0 16.6 13"><g fill="none" stroke="#fff" stroke-width="1.3"><path d="M2.2 5.5 C3 2.5 5.5 1 8.3 1 C11 1 13.3 2.6 14.3 5"/><path d="M14.4 7.5 C13.6 10.5 11.1 12 8.3 12 C5.6 12 3.3 10.4 2.3 8"/><path d="M11.5 5 H15 V1.5" stroke-width="1.2"/><path d="M5.1 8 H1.6 V11.5" stroke-width="1.2"/></g></svg>
<svg class="s" style="left:139.8px;top:773.2px;" width="15" height="15" viewBox="0 0 15 15"><g fill="none" stroke="#fff" stroke-width="1.2"><circle cx="7.5" cy="7.5" r="6.7"/><path d="M4.8 4.8 L10.2 10.2 M10.2 4.8 L4.8 10.2"/></g></svg>
<div class="t" style="left:160.00px;top:771.43px;font:normal normal 14.4px/20.16px 'Liberation Sans', sans-serif;color:#ffffff;letter-spacing:0px;">0</div>
<svg class="s" style="left:173.5px;top:773.2px;" width="15" height="14.5" viewBox="0 0 15 14.5"><g fill="none" stroke="#fff" stroke-width="1.2" stroke-linejoin="round"><path d="M7.5 0.9 L14.2 13.7 H0.8 Z"/><path d="M7.5 5 V9.8 M7.5 11 V12.2"/></g></svg>
<div class="t" style="left:193.30px;top:771.43px;font:normal normal 14.4px/20.16px 'Liberation Sans', sans-serif;color:#ffffff;letter-spacing:0px;">0</div>
<svg class="s" style="left:225.9px;top:772.8px;" width="7.5" height="14.6" viewBox="0 0 7.5 14.6"><g fill="none" stroke="#fff" stroke-width="1.1"><circle cx="3.75" cy="2" r="1.5"/><path d="M1.5 5 H6 V10 L5.2 10.5 V14 H2.3 V10.5 L1.5 10 Z"/></g></svg>
<div class="t" style="left:242.40px;top:771.03px;font:normal normal 14.4px/20.16px 'Liberation Sans', sans-serif;color:#ffffff;letter-spacing:0.1px;">Riccardo</div>
<svg class="s" style="left:304px;top:774px;" width="14" height="13" viewBox="0 0 14 13"><rect x="0.5" y="5.5" width="10" height="7.5" rx="1" fill="#c9a227"/><path d="M2.5 5.5 V3.5 C2.5 1 8.5 1 8.5 3.5 V5.5" fill="none" stroke="#b0b0b0" stroke-width="1.5"/><circle cx="10.8" cy="3" r="2.6" fill="#e3b43a"/><path d="M10.8 5 V11" stroke="#e3b43a" stroke-width="1.6"/></svg>
<svg class="s" style="left:338.4px;top:773.3px;" width="16" height="15" viewBox="0 0 16 15"><g fill="none" stroke="#fff" stroke-width="1.2" stroke-linejoin="round"><path d="M10 0.8 L15.2 5.8 L10 10.5 V7.5 C6 7.5 3.5 8.5 1 11 C1.5 6 5 3.8 10 3.8 Z"/><circle cx="7" cy="12" r="2.4"/></g></svg>
<div class="t" style="left:357.60px;top:771.43px;font:normal normal 14.4px/20.16px 'Liberation Sans', sans-serif;color:#ffffff;letter-spacing:0.15px;">Live Share</div>
<svg class="s" style="left:1267px;top:773px;" width="15" height="15" viewBox="0 0 15 15"><g fill="none" stroke="#fff" stroke-width="1.1"><path d="M4 3 V0.6 H14.4 V8.2 H11"/><path d="M9.6 7.2 L11.2 8.4 L9.6 9.8"/><circle cx="5" cy="7" r="2.4"/><path d="M0.6 14.4 C1 11.5 2.8 10.2 5 10.2 C7.2 10.2 9 11.5 9.4 14.4"/></g></svg>
<svg class="s" style="left:1304px;top:773px;" width="13" height="15" viewBox="0 0 13 15"><g fill="none" stroke="#fff" stroke-width="1.1" stroke-linejoin="round"><path d="M1 11.8 C2 10.8 2 9.5 2 7 V6.5 C2 3 4 0.8 6.5 0.8 C9 0.8 11 3 11 6.5 V7 C11 9.5 11 10.8 12 11.8 Z"/><path d="M5.2 12.2 C5.2 14.2 7.8 14.2 7.8 12.2"/></g></svg>
</body></html>
